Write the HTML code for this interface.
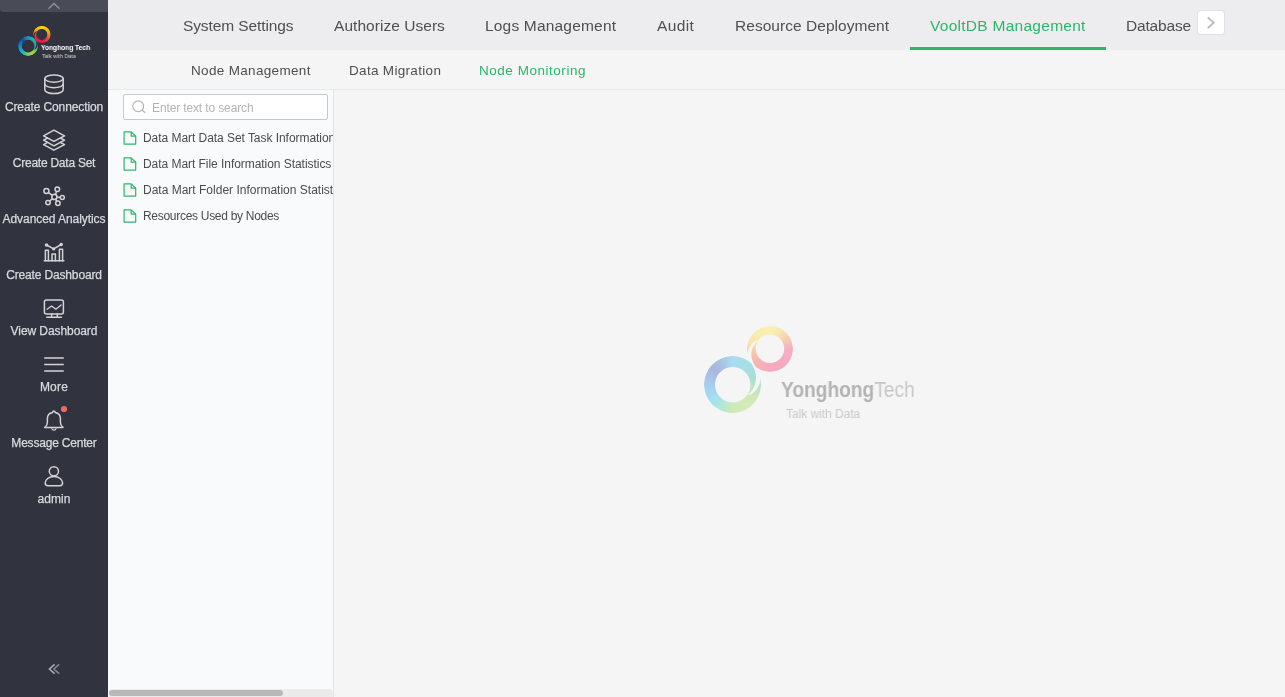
<!DOCTYPE html>
<html lang="en">
<head>
<meta charset="utf-8">
<title>VooltDB Management - Node Monitoring</title>
<style>
*{box-sizing:border-box;margin:0;padding:0}
html,body{width:1285px;height:697px;overflow:hidden;background:#f5f5f5;font-family:"Liberation Sans",sans-serif;}
.abs{position:absolute}
#side{position:absolute;left:0;top:0;width:108px;height:697px;background:#31343f;overflow:hidden}
#side .strip{position:absolute;left:0;top:0;width:108px;height:12px;background:#494b57;border-bottom-left-radius:3px;}
.nav,.tab,.stab,.item,#search span,.gx{will-change:transform}
.nav{-webkit-text-stroke:.25px #dadadd;position:absolute;left:0;width:108px;text-align:center;color:#dadadd;font-size:12px;line-height:16px;white-space:nowrap;}
#top{position:absolute;left:108px;top:0;width:1177px;height:50px;background:#ededf0;}
.tab{position:absolute;top:14.6px;font-size:15.5px;line-height:22px;color:#4f4f4f;white-space:nowrap;}
.tab.on,.stab.on{color:#2db56d;}
#uline{position:absolute;left:802px;top:47px;width:196px;height:3px;background:#2db56d}
#more{position:absolute;left:1090px;top:11px;width:26px;height:23px;background:#fff;box-shadow:0 0 0 1px rgba(40,40,60,.05);border-radius:3px}
#sub{position:absolute;left:108px;top:50px;width:1177px;height:40px;background:#f5f5f5;border-bottom:1px solid #e8e8ea;}
.stab{position:absolute;top:11.5px;font-size:13.5px;line-height:18px;color:#4f4f4f;white-space:nowrap;}
#left{position:absolute;left:108px;top:90px;width:226px;height:607px;background:#f9fafb;border-right:1px solid #e4e4e7;overflow:hidden;}
#search{position:absolute;left:15px;top:4px;width:205px;height:26px;background:#fff;border:1px solid #c9c9c9;border-radius:2px;}
#search span{position:absolute;left:28px;top:6px;font-size:12px;line-height:14px;color:#b3b3b3;white-space:nowrap;}
.item{position:absolute;left:34.5px;font-size:12px;line-height:16px;color:#4b4b4b;white-space:nowrap;}
.fi{position:absolute;left:15px;}
#track{position:absolute;left:1px;top:599px;width:224px;height:8px;background:#ebebeb;border-radius:4px 4px 0 0}
#thumb{position:absolute;left:1px;top:600px;width:174px;height:6px;background:#b8b8b8;border-radius:3px}
#main{position:absolute;left:334px;top:90px;width:951px;height:607px;background:#f5f5f5;}
.ring{position:absolute;border-radius:50%}
.rb{background:conic-gradient(from 0deg,#1d97c4 0deg,#27aab0 40deg,#2aa8a0 95deg,#7ccb4c 125deg,#a3d830 150deg,#6fcb70 185deg,#14b4cc 225deg,#0b86d4 275deg,#0a4fa2 318deg,#1d97c4 360deg);clip-path:polygon(75.5% 68.5%,77.6% 67%,79.7% 65.2%,81.6% 63.3%,83.4% 61.1%,85.1% 58.7%,86.5% 56.2%,87.8% 53.4%,88.9% 50.5%,89.7% 47.5%,90.4% 44.3%,90.7% 41.1%,90.8% 37.7%,90.6% 34.3%,90.1% 30.8%,89.3% 27.3%,88.2% 23.8%,86.8% 20.4%,85.1% 17%,83.1% 13.8%,80.8% 10.6%,78% 8.5%,75% 6.7%,71.9% 5%,68.7% 3.6%,65.4% 2.4%,62% 1.5%,58.6% 0.7%,55.1% 0.3%,51.6% 0%,48.1% 0%,44.7% 0.3%,41.2% 0.8%,37.8% 1.5%,34.4% 2.5%,31.1% 3.7%,27.9% 5.1%,24.8% 6.8%,21.9% 8.7%,19.1% 10.7%,16.4% 13%,13.9% 15.4%,11.5% 18%,9.4% 20.8%,7.5% 23.7%,5.7% 26.8%,4.2% 29.9%,2.9% 33.2%,1.9% 36.5%,1% 39.9%,0.4% 43.4%,0.1% 46.8%,0% 50.3%,0.1% 53.8%,0.5% 57.3%,1.2% 60.8%,2% 64.2%,3.2% 67.5%,4.5% 70.7%,6.1% 73.8%,7.8% 76.9%,9.8% 79.7%,12% 82.5%,14.4% 85.1%,16.9% 87.5%,19.6% 89.7%,22.5% 91.7%,25.4% 93.6%,28.6% 95.2%,31.8% 96.6%,35.1% 97.7%,38.4% 98.6%,41.9% 99.3%,45.3% 99.8%,48.8% 100%,52.3% 99.9%,55.8% 99.7%,59.3% 99.1%,62.7% 98.4%,66.1% 97.4%,69.3% 96.1%,72.5% 94.6%,75.6% 93%,78.5% 91.1%,81.3% 89%,84% 86.7%,86.5% 84.2%,88.8% 81.6%,90.9% 78.8%,92.8% 75.9%,94.5% 72.8%,96% 69.6%,97.2% 66.4%,98.3% 63%,99.1% 59.6%,99.6% 56.1%,99.9% 52.7%,100% 49.2%,99.8% 45.7%,99.4% 42.2%,98.7% 38.8%,98.5% 41%,98.1% 43.2%,97.6% 45.3%,97.1% 47.4%,96.4% 49.4%,95.6% 51.4%,94.8% 53.2%,93.8% 55.1%,92.8% 56.8%,91.6% 58.5%,90.4% 60%,89.1% 61.5%,87.8% 62.9%,86.3% 64.2%,84.8% 65.3%,83.2% 66.4%,81.6% 67.2%,79.8% 68%,77.9% 68.5%,75.5% 68.5%,74.1% 70.2%,72.7% 71.9%,71.1% 73.4%,69.4% 74.8%,67.6% 76.1%,65.8% 77.3%,63.8% 78.3%,61.8% 79.2%,59.7% 80%,57.6% 80.6%,55.5% 81%,53.3% 81.3%,51.1% 81.5%,48.9% 81.5%,46.7% 81.3%,44.5% 81%,42.4% 80.6%,40.3% 80%,38.2% 79.2%,36.2% 78.3%,34.3% 77.3%,32.4% 76.1%,30.6% 74.8%,28.9% 73.4%,27.3% 71.9%,25.9% 70.2%,24.5% 68.5%,23.3% 66.7%,22.2% 64.8%,21.2% 62.8%,20.4% 60.8%,19.7% 58.7%,19.2% 56.5%,18.8% 54.4%,18.6% 52.2%,18.5% 50%,18.6% 47.8%,18.8% 45.6%,19.2% 43.5%,19.7% 41.3%,20.4% 39.2%,21.2% 37.2%,22.2% 35.2%,23.3% 33.3%,24.5% 31.5%,25.9% 29.8%,27.3% 28.1%,28.9% 26.6%,30.6% 25.2%,32.4% 23.9%,34.2% 22.7%,36.2% 21.7%,38.2% 20.8%,40.3% 20%,42.4% 19.4%,44.5% 19%,46.7% 18.7%,48.9% 18.5%,51.1% 18.5%,53.3% 18.7%,55.5% 19%,57.6% 19.4%,59.7% 20%,61.8% 20.8%,63.8% 21.7%,65.8% 22.7%,67.6% 23.9%,69.4% 25.2%,71.1% 26.6%,72.7% 28.1%,74.1% 29.8%,75.5% 31.5%,76.7% 33.3%,77.8% 35.2%,78.8% 37.2%,79.6% 39.2%,80.3% 41.3%,80.8% 43.5%,81.2% 45.6%,81.4% 47.8%,81.5% 50%,81.4% 52.2%,81.2% 54.4%,80.8% 56.5%,80.3% 58.7%,79.6% 60.8%,78.8% 62.8%,77.8% 64.8%,76.7% 66.7%)}
.rs{background:conic-gradient(from 0deg,#ffd800 0deg,#fbc20c 40deg,#f58a20 90deg,#ef3a40 135deg,#e8104f 180deg,#e8243c 230deg,#ea4a22 275deg,#f3a018 300deg,#fbc808 335deg,#ffd800 360deg);clip-path:polygon(24.5% 31.5%,22.4% 33%,20.3% 34.8%,18.4% 36.7%,16.6% 38.9%,14.9% 41.3%,13.5% 43.8%,12.2% 46.6%,11.1% 49.5%,10.3% 52.5%,9.6% 55.7%,9.3% 58.9%,9.2% 62.3%,9.4% 65.7%,9.9% 69.2%,10.7% 72.7%,11.8% 76.2%,13.2% 79.6%,14.9% 83%,16.9% 86.2%,19.2% 89.4%,22% 91.5%,25% 93.3%,28.1% 95%,31.3% 96.4%,34.6% 97.6%,38% 98.5%,41.4% 99.3%,44.9% 99.7%,48.4% 100%,51.9% 100%,55.3% 99.7%,58.8% 99.2%,62.2% 98.5%,65.6% 97.5%,68.9% 96.3%,72.1% 94.9%,75.2% 93.2%,78.1% 91.3%,80.9% 89.3%,83.6% 87%,86.1% 84.6%,88.5% 82%,90.6% 79.2%,92.5% 76.3%,94.3% 73.2%,95.8% 70.1%,97.1% 66.8%,98.1% 63.5%,99% 60.1%,99.6% 56.6%,99.9% 53.2%,100% 49.7%,99.9% 46.2%,99.5% 42.7%,98.8% 39.2%,98% 35.8%,96.8% 32.5%,95.5% 29.3%,93.9% 26.2%,92.2% 23.1%,90.2% 20.3%,88% 17.5%,85.6% 14.9%,83.1% 12.5%,80.4% 10.3%,77.5% 8.3%,74.6% 6.4%,71.4% 4.8%,68.2% 3.4%,64.9% 2.3%,61.6% 1.4%,58.1% 0.7%,54.7% 0.2%,51.2% 0%,47.7% 0.1%,44.2% 0.3%,40.7% 0.9%,37.3% 1.6%,33.9% 2.6%,30.7% 3.9%,27.5% 5.4%,24.4% 7%,21.5% 8.9%,18.7% 11%,16% 13.3%,13.5% 15.8%,11.2% 18.4%,9.1% 21.2%,7.2% 24.1%,5.5% 27.2%,4% 30.4%,2.8% 33.6%,1.7% 37%,0.9% 40.4%,0.4% 43.9%,0.1% 47.3%,0% 50.8%,0.2% 54.3%,0.6% 57.8%,1.3% 61.2%,1.5% 59%,1.9% 56.8%,2.4% 54.7%,2.9% 52.6%,3.6% 50.6%,4.4% 48.6%,5.2% 46.8%,6.2% 44.9%,7.2% 43.2%,8.4% 41.5%,9.6% 40%,10.9% 38.5%,12.2% 37.1%,13.7% 35.8%,15.2% 34.7%,16.8% 33.6%,18.4% 32.8%,20.2% 32%,22.1% 31.5%,24.5% 31.5%,25.9% 29.8%,27.3% 28.1%,28.9% 26.6%,30.6% 25.2%,32.4% 23.9%,34.2% 22.7%,36.2% 21.7%,38.2% 20.8%,40.3% 20%,42.4% 19.4%,44.5% 19%,46.7% 18.7%,48.9% 18.5%,51.1% 18.5%,53.3% 18.7%,55.5% 19%,57.6% 19.4%,59.7% 20%,61.8% 20.8%,63.8% 21.7%,65.8% 22.7%,67.6% 23.9%,69.4% 25.2%,71.1% 26.6%,72.7% 28.1%,74.1% 29.8%,75.5% 31.5%,76.7% 33.3%,77.8% 35.2%,78.8% 37.2%,79.6% 39.2%,80.3% 41.3%,80.8% 43.5%,81.2% 45.6%,81.4% 47.8%,81.5% 50%,81.4% 52.2%,81.2% 54.4%,80.8% 56.5%,80.3% 58.7%,79.6% 60.8%,78.8% 62.8%,77.8% 64.8%,76.7% 66.7%,75.5% 68.5%,74.1% 70.2%,72.7% 71.9%,71.1% 73.4%,69.4% 74.8%,67.6% 76.1%,65.7% 77.3%,63.8% 78.3%,61.8% 79.2%,59.7% 80%,57.6% 80.6%,55.5% 81%,53.3% 81.3%,51.1% 81.5%,48.9% 81.5%,46.7% 81.3%,44.5% 81%,42.4% 80.6%,40.3% 80%,38.2% 79.2%,36.2% 78.3%,34.3% 77.3%,32.4% 76.1%,30.6% 74.8%,28.9% 73.4%,27.3% 71.9%,25.9% 70.2%,24.5% 68.5%,23.3% 66.7%,22.2% 64.8%,21.2% 62.8%,20.4% 60.8%,19.7% 58.7%,19.2% 56.5%,18.8% 54.4%,18.6% 52.2%,18.5% 50%,18.6% 47.8%,18.8% 45.6%,19.2% 43.5%,19.7% 41.3%,20.4% 39.2%,21.2% 37.2%,22.2% 35.2%,23.3% 33.3%)}
.rbf{background:conic-gradient(from 0deg,#a8dcf2 0deg,#a6e0e6 35deg,#a8dfd2 75deg,#bfe4c4 100deg,#cfe8ba 125deg,#d4e9b8 150deg,#cdeab8 180deg,#b8e8cc 200deg,#a2e2f0 230deg,#a6cdee 270deg,#a9b6de 310deg,#a9c4e6 335deg,#a8dcf2 360deg);clip-path:polygon(74.9% 68.1%,77.1% 66.6%,79.1% 65%,81% 63.1%,82.9% 60.9%,84.5% 58.6%,86% 56.1%,87.4% 53.4%,88.5% 50.5%,89.4% 47.5%,90% 44.4%,90.4% 41.1%,90.5% 37.8%,90.4% 34.3%,89.9% 30.9%,89.1% 27.4%,88.1% 23.9%,86.7% 20.5%,85% 17.1%,83.1% 13.8%,80.8% 10.6%,78.7% 9%,76.5% 7.6%,74.2% 6.3%,71.9% 5.1%,69.5% 4%,67.1% 3%,64.6% 2.2%,62.1% 1.5%,59.5% 0.9%,57% 0.5%,54.4% 0.2%,51.7% 0%,49.1% 0%,46.5% 0.1%,43.9% 0.4%,41.3% 0.8%,38.8% 1.3%,36.2% 1.9%,33.7% 2.7%,31.3% 3.6%,28.9% 4.7%,26.5% 5.9%,24.2% 7.1%,22% 8.5%,19.9% 10.1%,17.9% 11.7%,15.9% 13.4%,14% 15.3%,12.3% 17.2%,10.6% 19.2%,9% 21.3%,7.6% 23.5%,6.3% 25.8%,5.1% 28.1%,4% 30.5%,3% 32.9%,2.2% 35.4%,1.5% 37.9%,0.9% 40.5%,0.5% 43%,0.2% 45.6%,0% 48.3%,0% 50.9%,0.1% 53.5%,0.4% 56.1%,0.8% 58.7%,1.3% 61.2%,1.9% 63.8%,2.7% 66.3%,3.6% 68.7%,4.7% 71.1%,5.9% 73.5%,7.1% 75.8%,8.5% 78%,10.1% 80.1%,11.7% 82.1%,13.4% 84.1%,15.3% 86%,17.2% 87.7%,19.2% 89.4%,21.3% 91%,23.5% 92.4%,25.8% 93.7%,28.1% 94.9%,30.5% 96%,32.9% 97%,35.4% 97.8%,37.9% 98.5%,40.5% 99.1%,43% 99.5%,45.6% 99.8%,48.3% 100%,50.9% 100%,53.5% 99.9%,56.1% 99.6%,58.7% 99.2%,61.2% 98.7%,63.8% 98.1%,66.3% 97.3%,68.7% 96.4%,71.1% 95.3%,73.5% 94.1%,75.8% 92.9%,78% 91.5%,80.1% 89.9%,82.1% 88.3%,84.1% 86.6%,86% 84.7%,87.7% 82.8%,89.4% 80.8%,91% 78.7%,92.4% 76.5%,93.7% 74.2%,94.9% 71.9%,96% 69.5%,97% 67.1%,97.8% 64.6%,98.5% 62.1%,99.1% 59.5%,99.5% 57%,99.8% 54.4%,100% 51.7%,100% 49.1%,99.9% 46.5%,99.6% 43.9%,99.2% 41.3%,98.7% 38.8%,98.4% 41%,98.1% 43.2%,97.6% 45.3%,97% 47.4%,96.3% 49.4%,95.5% 51.3%,94.6% 53.2%,93.6% 55%,92.5% 56.8%,91.4% 58.4%,90.1% 60%,88.8% 61.4%,87.4% 62.8%,85.9% 64%,84.4% 65.1%,82.8% 66.1%,81.1% 67%,79.3% 67.7%,77.4% 68.1%,74.9% 68.1%,73.9% 69.4%,72.9% 70.6%,71.8% 71.8%,70.6% 72.9%,69.4% 73.9%,68.1% 74.9%,66.8% 75.8%,65.4% 76.7%,64% 77.4%,62.5% 78.1%,61% 78.8%,59.5% 79.3%,58% 79.8%,56.4% 80.1%,54.8% 80.4%,53.2% 80.6%,51.6% 80.8%,50% 80.8%,48.4% 80.8%,46.8% 80.6%,45.2% 80.4%,43.6% 80.1%,42% 79.8%,40.5% 79.3%,39% 78.8%,37.5% 78.1%,36% 77.4%,34.6% 76.7%,33.2% 75.8%,31.9% 74.9%,30.6% 73.9%,29.4% 72.9%,28.2% 71.8%,27.1% 70.6%,26.1% 69.4%,25.1% 68.1%,24.2% 66.8%,23.3% 65.4%,22.6% 64%,21.9% 62.5%,21.2% 61%,20.7% 59.5%,20.2% 58%,19.9% 56.4%,19.6% 54.8%,19.4% 53.2%,19.2% 51.6%,19.2% 50%,19.2% 48.4%,19.4% 46.8%,19.6% 45.2%,19.9% 43.6%,20.2% 42%,20.7% 40.5%,21.2% 39%,21.9% 37.5%,22.6% 36%,23.3% 34.6%,24.2% 33.2%,25.1% 31.9%,26.1% 30.6%,27.1% 29.4%,28.2% 28.2%,29.4% 27.1%,30.6% 26.1%,31.9% 25.1%,33.2% 24.2%,34.6% 23.3%,36% 22.6%,37.5% 21.9%,39% 21.2%,40.5% 20.7%,42% 20.2%,43.6% 19.9%,45.2% 19.6%,46.8% 19.4%,48.4% 19.2%,50% 19.2%,51.6% 19.2%,53.2% 19.4%,54.8% 19.6%,56.4% 19.9%,58% 20.2%,59.5% 20.7%,61% 21.2%,62.5% 21.9%,64% 22.6%,65.4% 23.3%,66.8% 24.2%,68.1% 25.1%,69.4% 26.1%,70.6% 27.1%,71.8% 28.2%,72.9% 29.4%,73.9% 30.6%,74.9% 31.9%,75.8% 33.2%,76.7% 34.6%,77.4% 36%,78.1% 37.5%,78.8% 39%,79.3% 40.5%,79.8% 42%,80.1% 43.6%,80.4% 45.2%,80.6% 46.8%,80.8% 48.4%,80.8% 50%,80.8% 51.6%,80.6% 53.2%,80.4% 54.8%,80.1% 56.4%,79.8% 58%,79.3% 59.5%,78.8% 61%,78.1% 62.5%,77.4% 64%,76.7% 65.4%,75.8% 66.8%)}
.rsf{background:conic-gradient(from 0deg,#faf0b2 0deg,#f9e6b0 30deg,#f6ccb4 60deg,#f5b0c4 90deg,#f5a9c2 135deg,#f5aabc 180deg,#f5b4b4 225deg,#f6c8a8 262deg,#f8e4aa 285deg,#f9eeb0 320deg,#faf0b2 360deg);clip-path:polygon(25.1% 31.9%,22.9% 33.4%,20.9% 35%,19% 36.9%,17.1% 39.1%,15.5% 41.4%,14% 43.9%,12.6% 46.6%,11.5% 49.5%,10.6% 52.5%,10% 55.6%,9.6% 58.9%,9.5% 62.2%,9.6% 65.7%,10.1% 69.1%,10.9% 72.6%,11.9% 76.1%,13.3% 79.5%,15% 82.9%,16.9% 86.2%,19.2% 89.4%,21.3% 91%,23.5% 92.4%,25.8% 93.7%,28.1% 94.9%,30.5% 96%,32.9% 97%,35.4% 97.8%,37.9% 98.5%,40.5% 99.1%,43% 99.5%,45.6% 99.8%,48.3% 100%,50.9% 100%,53.5% 99.9%,56.1% 99.6%,58.7% 99.2%,61.2% 98.7%,63.8% 98.1%,66.3% 97.3%,68.7% 96.4%,71.1% 95.3%,73.5% 94.1%,75.8% 92.9%,78% 91.5%,80.1% 89.9%,82.1% 88.3%,84.1% 86.6%,86% 84.7%,87.7% 82.8%,89.4% 80.8%,91% 78.7%,92.4% 76.5%,93.7% 74.2%,94.9% 71.9%,96% 69.5%,97% 67.1%,97.8% 64.6%,98.5% 62.1%,99.1% 59.5%,99.5% 57%,99.8% 54.4%,100% 51.7%,100% 49.1%,99.9% 46.5%,99.6% 43.9%,99.2% 41.3%,98.7% 38.8%,98.1% 36.2%,97.3% 33.7%,96.4% 31.3%,95.3% 28.9%,94.1% 26.5%,92.9% 24.2%,91.5% 22%,89.9% 19.9%,88.3% 17.9%,86.6% 15.9%,84.7% 14%,82.8% 12.3%,80.8% 10.6%,78.7% 9%,76.5% 7.6%,74.2% 6.3%,71.9% 5.1%,69.5% 4%,67.1% 3%,64.6% 2.2%,62.1% 1.5%,59.5% 0.9%,57% 0.5%,54.4% 0.2%,51.7% 0%,49.1% 0%,46.5% 0.1%,43.9% 0.4%,41.3% 0.8%,38.8% 1.3%,36.2% 1.9%,33.7% 2.7%,31.3% 3.6%,28.9% 4.7%,26.5% 5.9%,24.2% 7.1%,22% 8.5%,19.9% 10.1%,17.9% 11.7%,15.9% 13.4%,14% 15.3%,12.3% 17.2%,10.6% 19.2%,9% 21.3%,7.6% 23.5%,6.3% 25.8%,5.1% 28.1%,4% 30.5%,3% 32.9%,2.2% 35.4%,1.5% 37.9%,0.9% 40.5%,0.5% 43%,0.2% 45.6%,0% 48.3%,0% 50.9%,0.1% 53.5%,0.4% 56.1%,0.8% 58.7%,1.3% 61.2%,1.6% 59%,1.9% 56.8%,2.4% 54.7%,3% 52.6%,3.7% 50.6%,4.5% 48.7%,5.4% 46.8%,6.4% 45%,7.5% 43.2%,8.6% 41.6%,9.9% 40%,11.2% 38.6%,12.6% 37.2%,14.1% 36%,15.6% 34.9%,17.2% 33.9%,18.9% 33%,20.7% 32.3%,22.6% 31.9%,25.1% 31.9%,26.1% 30.6%,27.1% 29.4%,28.2% 28.2%,29.4% 27.1%,30.6% 26.1%,31.9% 25.1%,33.2% 24.2%,34.6% 23.3%,36% 22.6%,37.5% 21.9%,39% 21.2%,40.5% 20.7%,42% 20.2%,43.6% 19.9%,45.2% 19.6%,46.8% 19.4%,48.4% 19.2%,50% 19.2%,51.6% 19.2%,53.2% 19.4%,54.8% 19.6%,56.4% 19.9%,58% 20.2%,59.5% 20.7%,61% 21.2%,62.5% 21.9%,64% 22.6%,65.4% 23.3%,66.8% 24.2%,68.1% 25.1%,69.4% 26.1%,70.6% 27.1%,71.8% 28.2%,72.9% 29.4%,73.9% 30.6%,74.9% 31.9%,75.8% 33.2%,76.7% 34.6%,77.4% 36%,78.1% 37.5%,78.8% 39%,79.3% 40.5%,79.8% 42%,80.1% 43.6%,80.4% 45.2%,80.6% 46.8%,80.8% 48.4%,80.8% 50%,80.8% 51.6%,80.6% 53.2%,80.4% 54.8%,80.1% 56.4%,79.8% 58%,79.3% 59.5%,78.8% 61%,78.1% 62.5%,77.4% 64%,76.7% 65.4%,75.8% 66.8%,74.9% 68.1%,73.9% 69.4%,72.9% 70.6%,71.8% 71.8%,70.6% 72.9%,69.4% 73.9%,68.1% 74.9%,66.8% 75.8%,65.4% 76.7%,64% 77.4%,62.5% 78.1%,61% 78.8%,59.5% 79.3%,58% 79.8%,56.4% 80.1%,54.8% 80.4%,53.2% 80.6%,51.6% 80.8%,50% 80.8%,48.4% 80.8%,46.8% 80.6%,45.2% 80.4%,43.6% 80.1%,42% 79.8%,40.5% 79.3%,39% 78.8%,37.5% 78.1%,36% 77.4%,34.6% 76.7%,33.2% 75.8%,31.9% 74.9%,30.6% 73.9%,29.4% 72.9%,28.2% 71.8%,27.1% 70.6%,26.1% 69.4%,25.1% 68.1%,24.2% 66.8%,23.3% 65.4%,22.6% 64%,21.9% 62.5%,21.2% 61%,20.7% 59.5%,20.2% 58%,19.9% 56.4%,19.6% 54.8%,19.4% 53.2%,19.2% 51.6%,19.2% 50%,19.2% 48.4%,19.4% 46.8%,19.6% 45.2%,19.9% 43.6%,20.2% 42%,20.7% 40.5%,21.2% 39%,21.9% 37.5%,22.6% 36%,23.3% 34.6%,24.2% 33.2%)}
</style>
</head>
<body>
<div id="side">
  <div class="strip"></div>
  <svg class="abs" style="left:44px;top:0" width="20" height="12" viewBox="44 0 20 12" fill="none" stroke="#9192a0" stroke-width="1.4"><path d="M48.4 8.8L54 3.5 59.6 8.8"/></svg>
  <div class="ring rb" style="left:18.2px;top:36.1px;width:20px;height:20px"></div>
  <div class="ring rs" style="left:33px;top:25.7px;width:17.5px;height:17.5px"></div>
  <div class="abs gx" style="left:41.1px;top:42.5px;font-size:7.5px;line-height:9px;font-weight:bold;color:#fff;white-space:nowrap;transform:scaleX(.884);transform-origin:0 0" id="sl1"><span>Yonghong Tech</span></div>
  <div class="abs gx" style="left:42px;top:53px;font-size:6px;line-height:7px;color:#d4d4d6;white-space:nowrap;transform:scaleX(.908);transform-origin:0 0" id="sl2"><span>Talk with Data</span></div>
  <svg class="abs" style="left:40px;top:70px" width="30" height="30" viewBox="40 70 30 30" fill="none" stroke="#d3d3d6" stroke-width="1.5" stroke-linecap="round" stroke-linejoin="round" ><ellipse cx="54" cy="78.6" rx="9.2" ry="3.6"/><path d="M44.8 78.6v11.2c0 2.1 4.1 3.8 9.2 3.8s9.2-1.7 9.2-3.8V78.6"/><path d="M44.8 84.1c0 2 4.1 3.6 9.2 3.6s9.2-1.6 9.2-3.6"/></svg><svg class="abs" style="left:40px;top:126px" width="30" height="30" viewBox="40 126 30 30" fill="none" stroke="#d3d3d6" stroke-width="1.5" stroke-linecap="round" stroke-linejoin="round" ><path d="M53.9 130.2L64.5 135.8 53.9 141.4 43.6 135.8z"/><path d="M47.6 138L43.6 140.2 53.9 145.8 64.5 140.2 60.4 138"/><path d="M47.6 142.4L43.6 144.6 53.9 150.2 64.5 144.6 60.4 142.4"/></svg><svg class="abs" style="left:40px;top:182px" width="30" height="30" viewBox="40 182 30 30" fill="none" stroke="#d3d3d6" stroke-width="1.5" stroke-linecap="round" stroke-linejoin="round" ><circle cx="54.4" cy="196.9" r="2.6"/><circle cx="46.4" cy="191.1" r="2.5"/><circle cx="57.3" cy="189.2" r="2.3"/><circle cx="62.3" cy="197.6" r="2"/><circle cx="48" cy="202.6" r="2.2"/><circle cx="57.9" cy="203.3" r="2.2"/><path d="M48.5 192.6L52.4 195.4M56.6 191.5L55.3 194.6M56.8 197.1L60.3 197.4M52.6 198.6L49.6 201M55.4 199.1L57 201.2"/></svg><svg class="abs" style="left:40px;top:238px" width="30" height="30" viewBox="40 238 30 30" fill="none" stroke="#d3d3d6" stroke-width="1.5" stroke-linecap="round" stroke-linejoin="round" ><path d="M44.3 260.7H63.9"/><path d="M45.4 260.7V250.3h3v10.4M52 260.7v-6.8h3.4v6.8M59.4 260.7V249.2h3.2v11.5"/><path d="M46.5 245L53.7 248.9 61.2 244.5"/><circle cx="46.5" cy="245" r="1" fill="#d3d3d6"/><circle cx="61.2" cy="244.5" r="1" fill="#d3d3d6"/><circle cx="53.7" cy="248.9" r="0.8" fill="#d3d3d6"/></svg><svg class="abs" style="left:40px;top:294px" width="30" height="30" viewBox="40 294 30 30" fill="none" stroke="#d3d3d6" stroke-width="1.5" stroke-linecap="round" stroke-linejoin="round" ><rect x="44.4" y="299.9" width="19" height="14" rx="2"/><path d="M51.6 314v3M57.3 314v3M46.8 317.2H61.4"/><path d="M47 309.2L51.6 306 55.9 309.2 61.1 305" stroke-width="1.3"/></svg><svg class="abs" style="left:40px;top:350px" width="30" height="30" viewBox="40 350 30 30" fill="none" stroke="#d3d3d6" stroke-width="1.5" stroke-linecap="round" stroke-linejoin="round" ><path d="M44.2 357.9H63.8M44.2 364.5H63.8M44.2 371H63.8" stroke-linecap="butt"/></svg><svg class="abs" style="left:40px;top:404px" width="30" height="30" viewBox="40 404 30 30" fill="none" stroke="#d3d3d6" stroke-width="1.5" stroke-linecap="round" stroke-linejoin="round" ><path d="M44.8 427.4c1.7-1.3 2.6-3 2.6-5.2v-3.6c0-3.3 2.2-5.5 5.2-6.1.1-1 .600-1.5 1.3-1.5s1.2.5 1.3 1.5c3 .6 5.2 2.8 5.2 6.1v3.6c0 2.2.9 3.9 2.6 5.2z"/><path d="M51.8 428.6c.3 1 1.1 1.5 2.1 1.5s1.8-.5 2.1-1.5" stroke-width="1.2"/><circle cx="64" cy="409" r="3.1" fill="#ee6a5e" stroke="none"/></svg><svg class="abs" style="left:40px;top:460px" width="30" height="30" viewBox="40 460 30 30" fill="none" stroke="#d3d3d6" stroke-width="1.5" stroke-linecap="round" stroke-linejoin="round" ><circle cx="53.9" cy="471.3" r="4.6"/><path d="M45.2 483.1c0-3.6 3.6-6.5 8.7-6.5s8.7 2.9 8.7 6.5c0 1.6-1.2 2.6-2.8 2.6h-11.8c-1.6 0-2.8-1-2.8-2.6z"/></svg>
  <div class="nav" style="top:98.7px;letter-spacing:-0.11px;"><span>Create Connection</span></div>
<div class="nav" style="top:154.7px;letter-spacing:-0.243px;"><span>Create Data Set</span></div>
<div class="nav" style="top:210.7px;letter-spacing:-0.065px;"><span>Advanced Analytics</span></div>
<div class="nav" style="top:266.7px;letter-spacing:-0.154px;"><span>Create Dashboard</span></div>
<div class="nav" style="top:322.7px;letter-spacing:-0.075px;"><span>View Dashboard</span></div>
<div class="nav" style="top:378.7px;letter-spacing:0.189px;"><span>More</span></div>
<div class="nav" style="top:434.7px;letter-spacing:-0.196px;"><span>Message Center</span></div>
<div class="nav" style="top:490.7px;letter-spacing:0.042px;"><span>admin</span></div>

  <svg class="abs" style="left:44px;top:660px" width="20" height="18" viewBox="44 660 20 18" fill="none" stroke-width="1.6"><path d="M54.6 664.3L49.4 669 54.6 673.7" stroke="#a9aab2"/><path d="M59.1 664.3L53.9 669 59.1 673.7" stroke="#82848f"/></svg>
</div>
<div id="top">
<div class="tab" style="left:74.6px;letter-spacing:-0.107px;"><span>System Settings</span></div>
<div class="tab" style="left:225.9px;letter-spacing:0.042px;"><span>Authorize Users</span></div>
<div class="tab" style="left:377.2px;letter-spacing:0.187px;"><span>Logs Management</span></div>
<div class="tab" style="left:548.8px;letter-spacing:0.391px;"><span>Audit</span></div>
<div class="tab" style="left:627.2px;letter-spacing:0.039px;"><span>Resource Deployment</span></div>
<div class="tab on" style="left:821.7px;letter-spacing:0.272px;"><span>VooltDB Management</span></div>
<div class="tab" style="left:1017.8px;letter-spacing:-0.182px;"><span>Database</span></div>

  <div id="uline"></div>
  <div id="more"><svg class="abs" style="left:0;top:0" width="26" height="23" viewBox="0 0 26 23" fill="none" stroke="#b9b9b9" stroke-width="1.8"><path d="M9.8 6.3L15.7 11.7 9.8 17.1"/></svg></div>
</div>
<div id="sub">
<div class="stab" style="left:83.3px;letter-spacing:0.331px;"><span>Node Management</span></div>
<div class="stab" style="left:240.9px;letter-spacing:0.315px;"><span>Data Migration</span></div>
<div class="stab on" style="left:370.9px;letter-spacing:0.529px;"><span>Node Monitoring</span></div>

</div>
<div id="left">
  <div id="search"><svg class="abs" style="left:7px;top:5px" width="16" height="16" viewBox="0 0 16 16" fill="none" stroke="#b0b0b0" stroke-width="1.1"><circle cx="7.2" cy="6.3" r="5.4"/><path d="M11.1 10.2L14.3 12.8"/></svg><span style="letter-spacing:-0.128px;">Enter text to search</span></div>
<svg class="fi" style="top:41px" width="14" height="15" viewBox="0 0 14 15" fill="none" stroke="#2db56d" stroke-width="1.2" stroke-linejoin="round"><path d="M1.1 0.9H8.2L12.7 5.2V13.1H1.1z"/><path d="M8.2 0.9V5.2H12.7"/></svg><div class="item" style="top:40px;letter-spacing:-0.048px;"><span>Data Mart Data Set Task Information Statistics</span></div>
<svg class="fi" style="top:67px" width="14" height="15" viewBox="0 0 14 15" fill="none" stroke="#2db56d" stroke-width="1.2" stroke-linejoin="round"><path d="M1.1 0.9H8.2L12.7 5.2V13.1H1.1z"/><path d="M8.2 0.9V5.2H12.7"/></svg><div class="item" style="top:66px;letter-spacing:-0.048px;"><span>Data Mart File Information Statistics</span></div>
<svg class="fi" style="top:93px" width="14" height="15" viewBox="0 0 14 15" fill="none" stroke="#2db56d" stroke-width="1.2" stroke-linejoin="round"><path d="M1.1 0.9H8.2L12.7 5.2V13.1H1.1z"/><path d="M8.2 0.9V5.2H12.7"/></svg><div class="item" style="top:92px;letter-spacing:0.002px;"><span>Data Mart Folder Information Statistics</span></div>
<svg class="fi" style="top:119px" width="14" height="15" viewBox="0 0 14 15" fill="none" stroke="#2db56d" stroke-width="1.2" stroke-linejoin="round"><path d="M1.1 0.9H8.2L12.7 5.2V13.1H1.1z"/><path d="M8.2 0.9V5.2H12.7"/></svg><div class="item" style="top:118px;letter-spacing:-0.293px;"><span>Resources Used by Nodes</span></div>

  <div id="track"></div><div id="thumb"></div>
</div>
<div id="main">
  <div class="abs" style="left:0;top:0;width:951px;height:607px">
    <div class="ring rbf" style="left:370px;top:266px;width:57.4px;height:57.4px"></div>
    <div class="ring rsf" style="left:413px;top:235.8px;width:46px;height:46px"></div>
  </div>
  <div class="abs gx" id="cl1" style="left:447.2px;top:288px;font-size:21.4px;line-height:24px;white-space:nowrap;color:#c6c6c6;transform:scaleX(.895);transform-origin:0 0"><b style="color:#b3b3b3">Yonghong</b><span>Tech</span></div>
  <div class="abs gx" id="cl2" style="left:452.1px;top:317px;font-size:12.5px;line-height:15px;white-space:nowrap;color:#c9c9c9;transform:scaleX(.953);transform-origin:0 0"><span>Talk with Data</span></div>
</div>
</body>
</html>
